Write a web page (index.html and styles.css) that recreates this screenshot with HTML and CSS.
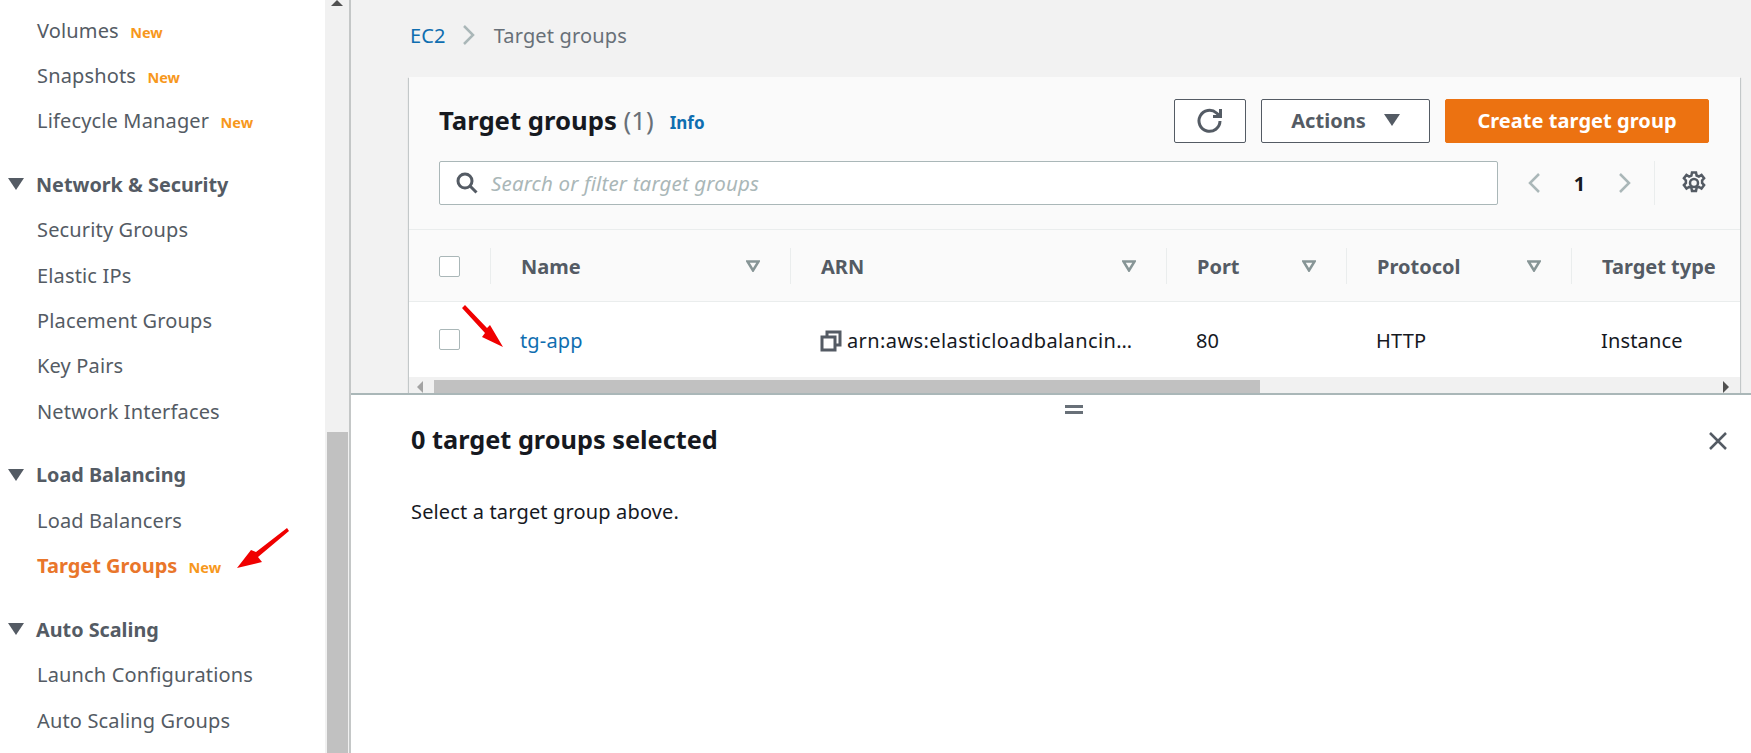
FILE: index.html
```html
<!DOCTYPE html>
<html lang="en">
  <head>
    <meta charset="UTF-8" />
    <title>Target groups | EC2</title>
    <link rel="stylesheet" href="styles.css">
  </head>
  <body>
    <div class="app">
      <nav class="sidebar">
        <ul class="nav-list">
          <li class="nav-item">Volumes <span class="new">New</span></li>
          <li class="nav-item">Snapshots <span class="new">New</span></li>
          <li class="nav-item">Lifecycle Manager <span class="new">New</span></li>
        </ul>
        <h3 class="nav-head"><svg class="caret" viewBox="0 0 16 12"><path d="M0 0h16L8 12z"/></svg>Network &amp; Security</h3>
        <ul class="nav-list">
          <li class="nav-item">Security Groups</li>
          <li class="nav-item">Elastic IPs</li>
          <li class="nav-item">Placement Groups</li>
          <li class="nav-item">Key Pairs</li>
          <li class="nav-item">Network Interfaces</li>
        </ul>
        <h3 class="nav-head"><svg class="caret" viewBox="0 0 16 12"><path d="M0 0h16L8 12z"/></svg>Load Balancing</h3>
        <ul class="nav-list">
          <li class="nav-item">Load Balancers</li>
          <li class="nav-item active">Target Groups <span class="new">New</span></li>
        </ul>
        <h3 class="nav-head"><svg class="caret" viewBox="0 0 16 12"><path d="M0 0h16L8 12z"/></svg>Auto Scaling</h3>
        <ul class="nav-list">
          <li class="nav-item">Launch Configurations</li>
          <li class="nav-item">Auto Scaling Groups</li>
        </ul>
      </nav>

      <div class="side-scroll">
        <svg class="side-up" viewBox="0 0 12 6"><path d="M0 6h12L6 0z"/></svg>
        <div class="side-thumb"></div>
      </div>

      <div class="content">
        <main class="top">
          <div class="crumbs">
            <a class="link">EC2</a>
            <svg class="crumb-sep" viewBox="0 0 14 22"><path d="M2 2l9 9-9 9"/></svg>
            <span class="crumb-now">Target groups</span>
          </div>

          <section class="card">
            <div class="card-head">
              <div class="title-row">
                <h1 class="title">Target groups <span class="count">(1)</span></h1>
                <a class="info">Info</a>
                <div class="actions">
                  <button class="btn btn-icon">
                    <svg width="26" height="26" viewBox="0 0 26 26"><path class="stroke" d="M23 14a10.500 10.500 0 1 1-3.500-8L23 9"/><path class="stroke" d="M23.500 2v7.500H16"/></svg>
                  </button>
                  <button class="btn btn-actions">Actions<svg class="btn-caret" viewBox="0 0 16 12"><path d="M0 0h16L8 12z"/></svg></button>
                  <button class="btn btn-primary">Create target group</button>
                </div>
              </div>
              <div class="filter-row">
                <div class="search">
                  <svg width="22" height="22" viewBox="0 0 22 22"><circle class="stroke" cx="9" cy="9" r="7"/><path class="stroke" d="M14 14l6.500 6.500"/></svg>
                  <span class="placeholder">Search or filter target groups</span>
                </div>
                <div class="pager">
                  <svg class="pager-arrow" viewBox="0 0 14 22"><path d="M12 2l-9 9 9 9"/></svg>
                  <span class="page-num">1</span>
                  <svg class="pager-arrow" viewBox="0 0 14 22"><path d="M2 2l9 9-9 9"/></svg>
                </div>
                <div class="prefs">
                  <svg width="26" height="26" viewBox="0 0 26 26"><circle class="stroke gear-hub" cx="13" cy="13" r="4"/><path class="stroke gear-rim" d="M11 2.500h4l.6 3 2.300 1 2.600-1.600 2.600 3.400-2 2.200v2.400l2 2.200-2.600 3.400-2.600-1.600-2.300 1-.6 3h-4l-.6-3-2.300-1-2.600 1.600-2.600-3.400 2-2.200v-2.400l-2-2.200 2.600-3.400 2.600 1.600 2.300-1z"/></svg>
                </div>
              </div>
            </div>

            <div class="table">
              <div class="row row-head">
                <div class="cell cell-check"><span class="checkbox"></span></div>
                <div class="cell">Name<svg class="sort" viewBox="0 0 14 12"><path d="M1.500 1.500h11L7 10.500z"/></svg></div>
                <div class="cell">ARN<svg class="sort" viewBox="0 0 14 12"><path d="M1.500 1.500h11L7 10.500z"/></svg></div>
                <div class="cell">Port<svg class="sort" viewBox="0 0 14 12"><path d="M1.500 1.500h11L7 10.500z"/></svg></div>
                <div class="cell">Protocol<svg class="sort" viewBox="0 0 14 12"><path d="M1.500 1.500h11L7 10.500z"/></svg></div>
                <div class="cell cell-last">Target type</div>
              </div>
              <div class="row row-body">
                <div class="cell cell-check"><span class="checkbox"></span></div>
                <div class="cell"><a class="link">tg-app</a></div>
                <div class="cell">
                  <svg class="copy" viewBox="0 0 22 22"><path d="M7 6V2h13v13h-5"/><path d="M2 7h13v13H2z"/></svg>
                  <span class="arn">arn:aws:elasticloadbalancin…</span>
                </div>
                <div class="cell">80</div>
                <div class="cell">HTTP</div>
                <div class="cell cell-last">Instance</div>
              </div>
              <div class="hscroll">
                <svg class="hscroll-left" viewBox="0 0 6 12"><path d="M6 0v12L0 6z"/></svg>
                <div class="hscroll-thumb"></div>
                <svg class="hscroll-right" viewBox="0 0 6 12"><path d="M0 0v12l6-6z"/></svg>
              </div>
            </div>
          </section>
        </main>

        <aside class="pane">
          <div class="handle"></div>
          <div class="pane-head">
            <h2 class="pane-title">0 target groups selected</h2>
            <svg class="pane-close" viewBox="0 0 20 20"><path d="M2 2l16 16M18 2L2 18"/></svg>
          </div>
          <p class="pane-text">Select a target group above.</p>
        </aside>
      </div>
    </div>

    <!-- red arrows drawn on top of the screenshot -->
    <svg class="mark mark-side" viewBox="0 0 56 48"><path d="M51 2L20 26l-5-2L1 42l25-6-4-5L53 5z"/></svg>
    <svg class="mark mark-row" viewBox="0 0 46 46"><path d="M5 1l22 23 3-3 13 22-21-10 3-4L2 4z"/></svg>
  </body>
</html>
```

FILE: styles.css
```css
* {
  padding: 0;
  margin: 0;
  box-sizing: border-box;
}
html,
body {
  height: 100%;
  overflow: hidden;
}
body {
  font-family: "Noto Sans", "Open Sans", sans-serif;
  font-size: 20px;
  letter-spacing: 0.15px;
  color: #16191f;
  background: #fff;
}
ul {
  list-style: none;
}
.app {
  display: flex;
  height: 753px;
}

/* left nav */
.sidebar {
  width: 325px;
  flex: none;
  overflow: hidden;
  color: #545b64;
  padding-top: 7.5px;
}
.nav-item {
  height: 45.3px;
  line-height: 45.3px;
  padding-left: 37px;
  white-space: nowrap;
}
.nav-item.active {
  color: #e9762b;
  font-weight: 700;
  letter-spacing: 0;
}
.new {
  margin-left: 6px;
  font-size: 14.5px;
  font-weight: 700;
  letter-spacing: 0;
  color: #f7981d;
}
.nav-head {
  display: flex;
  align-items: center;
  height: 46px;
  margin-top: 18px;
  font-size: 19.8px;
  font-weight: 700;
  letter-spacing: 0;
}
.caret {
  width: 16px;
  height: 12px;
  margin: 0 12px 0 8px;
  fill: #545b64;
}
.side-scroll {
  width: 26px;
  flex: none;
  display: flex;
  flex-direction: column;
  justify-content: flex-end;
  background: #f1f1f1;
  border-right: 2px solid #c4c7c7;
  position: relative;
}
.side-up {
  position: absolute;
  left: 6px;
  top: 0;
  width: 12px;
  height: 6px;
  fill: #505050;
}
.side-thumb {
  height: 321px;
  margin: 0 1px 0 2px;
  background: #c1c1c1;
}

/* right side */
.content {
  flex: 1;
  min-width: 0;
  display: flex;
  flex-direction: column;
}
.top {
  height: 393px;
  flex: none;
  background: #f2f2f2;
  padding: 0 11px 0 58px;
  overflow: hidden;
}
.crumbs {
  display: flex;
  align-items: center;
  height: 77px;
  padding: 0 0 7px 1px;
}
.link {
  color: #0f6eb0;
}
.crumb-sep {
  width: 14px;
  height: 22px;
  margin: 0 18px 0 16px;
  fill: none;
  stroke: #aab7b8;
  stroke-width: 2.500;
}
.crumb-now {
  color: #687078;
}
.card {
  background: #fff;
  box-shadow: 0 1px 1px 0 rgba(0, 28, 36, 0.3), 1px 1px 1px 0 rgba(0, 28, 36, 0.15), -1px 1px 1px 0 rgba(0, 28, 36, 0.15);
}
.card-head {
  height: 153px;
  padding: 22px 31px 0 30px;
  background: #fafafa;
  border-bottom: 1px solid #eaeded;
}
.title-row {
  display: flex;
  align-items: center;
  height: 44px;
}
.title {
  padding-bottom: 2px;
  font-size: 25.7px;
  font-weight: 700;
  letter-spacing: 0;
}
.count {
  font-weight: 400;
  color: #687078;
}
.info {
  margin-left: 16px;
  padding-top: 3px;
  font-size: 17px;
  font-weight: 700;
  letter-spacing: 0;
  color: #0f6eb0;
}
.actions {
  margin-left: auto;
  display: flex;
  gap: 15px;
}
.btn {
  height: 44px;
  padding-bottom: 2px;
  font: inherit;
  font-weight: 700;
  letter-spacing: 0.05px;
  border-radius: 2px;
  border: 1px solid #545b64;
  background: #fff;
  color: #545b64;
}
.btn-icon {
  width: 72px;
  display: flex;
  align-items: center;
  justify-content: center;
}
.btn-actions {
  width: 169px;
  display: flex;
  align-items: center;
  justify-content: center;
  gap: 18px;
}
.btn-caret {
  width: 16px;
  height: 12px;
  fill: #545b64;
}
.btn-primary {
  width: 264px;
  background: #ec7211;
  border-color: #ec7211;
  color: #fff;
}
.stroke {
  fill: none;
  stroke: #545b64;
  stroke-width: 3;
}
.gear-hub,
.gear-rim {
  stroke-width: 2.500;
}
.filter-row {
  display: flex;
  align-items: center;
  height: 44px;
  margin-top: 18px;
}
.search {
  width: 1059px;
  height: 44px;
  display: flex;
  align-items: center;
  gap: 13px;
  padding-left: 16px;
  background: #fff;
  border: 1px solid #aab7b8;
  border-radius: 2px;
}
.placeholder {
  font-size: 20.5px;
  font-style: italic;
  color: #aab7b8;
}
.pager {
  display: flex;
  align-items: center;
  margin-left: 29px;
}
.pager-arrow {
  width: 14px;
  height: 22px;
  fill: none;
  stroke: #aab7b8;
  stroke-width: 2.500;
}
.page-num {
  width: 77px;
  text-align: center;
  font-weight: 700;
}
.prefs {
  height: 44px;
  margin-left: 22px;
  padding-left: 26px;
  display: flex;
  align-items: center;
  border-left: 1px solid #eaeded;
}

/* table */
.table {
  overflow: hidden;
}
.row {
  display: grid;
  grid-template-columns: 82px 300px 376px 180px 225px 170px;
  width: 1333px;
}
.row-head {
  height: 72px;
  background: #fafafa;
  border-bottom: 1px solid #eaeded;
  color: #545b64;
  font-weight: 700;
  letter-spacing: 0;
}
.row-head .cell {
  display: flex;
  align-items: center;
  justify-content: space-between;
  height: 36px;
  margin-top: 18px;
  padding: 0 30px 0 30px;
  border-right: 1px solid #eaeded;
}
.row-head .cell-check {
  padding: 0 0 0 30px;
  justify-content: flex-start;
}
.row-head .cell-last {
  border-right: 0;
  white-space: nowrap;
}
.sort {
  width: 14px;
  height: 12px;
  fill: none;
  stroke: #879596;
  stroke-width: 2.500;
}
.row-body {
  height: 75px;
  padding-top: 2px;
  background: #fff;
  align-items: center;
}
.row-body .cell {
  display: flex;
  align-items: center;
  padding-left: 29px;
  min-width: 0;
  white-space: nowrap;
}
.row-body .cell-check {
  padding-left: 30px;
  margin-top: -3px;
}
.checkbox {
  width: 21px;
  height: 21px;
  background: #fff;
  border: 1px solid #aab7b8;
  border-radius: 2px;
}
.copy {
  width: 22px;
  height: 22px;
  flex: none;
  margin-right: 5px;
  fill: none;
  stroke: #545b64;
  stroke-width: 3;
}
.arn {
  letter-spacing: 0.4px;
}
.hscroll {
  display: flex;
  align-items: center;
  height: 16px;
  padding: 3px 0 0 8px;
  background: #f1f1f1;
}
.hscroll-left,
.hscroll-right {
  width: 6px;
  height: 12px;
  flex: none;
  fill: #a3a3a3;
}
.hscroll-right {
  margin-left: auto;
  margin-right: 11px;
  fill: #505050;
}
.hscroll-thumb {
  width: 826px;
  height: 13px;
  margin-left: 11px;
  background: #c1c1c1;
}

/* split panel */
.pane {
  flex: 1;
  position: relative;
  padding: 0 23px 0 60px;
  background: #fff;
  border-top: 2px solid #aab7b8;
}
.handle {
  position: absolute;
  left: 714px;
  top: 10px;
  width: 18px;
  height: 9px;
  border-top: 3px solid #687078;
  border-bottom: 3px solid #687078;
}
.pane-head {
  display: flex;
  align-items: center;
  justify-content: space-between;
  height: 44px;
  margin-top: 22px;
}
.pane-title {
  font-size: 25.3px;
  font-weight: 700;
  letter-spacing: 0;
}
.pane-close {
  width: 20px;
  height: 20px;
  margin-top: 4px;
  fill: none;
  stroke: #545b64;
  stroke-width: 2.500;
}
.pane-text {
  margin-top: 37px;
}

/* annotations */
.mark {
  position: absolute;
  fill: #f00000;
}
.mark-side {
  left: 236px;
  top: 526px;
  width: 56px;
  height: 48px;
}
.mark-row {
  left: 460px;
  top: 304px;
  width: 46px;
  height: 46px;
}
```
